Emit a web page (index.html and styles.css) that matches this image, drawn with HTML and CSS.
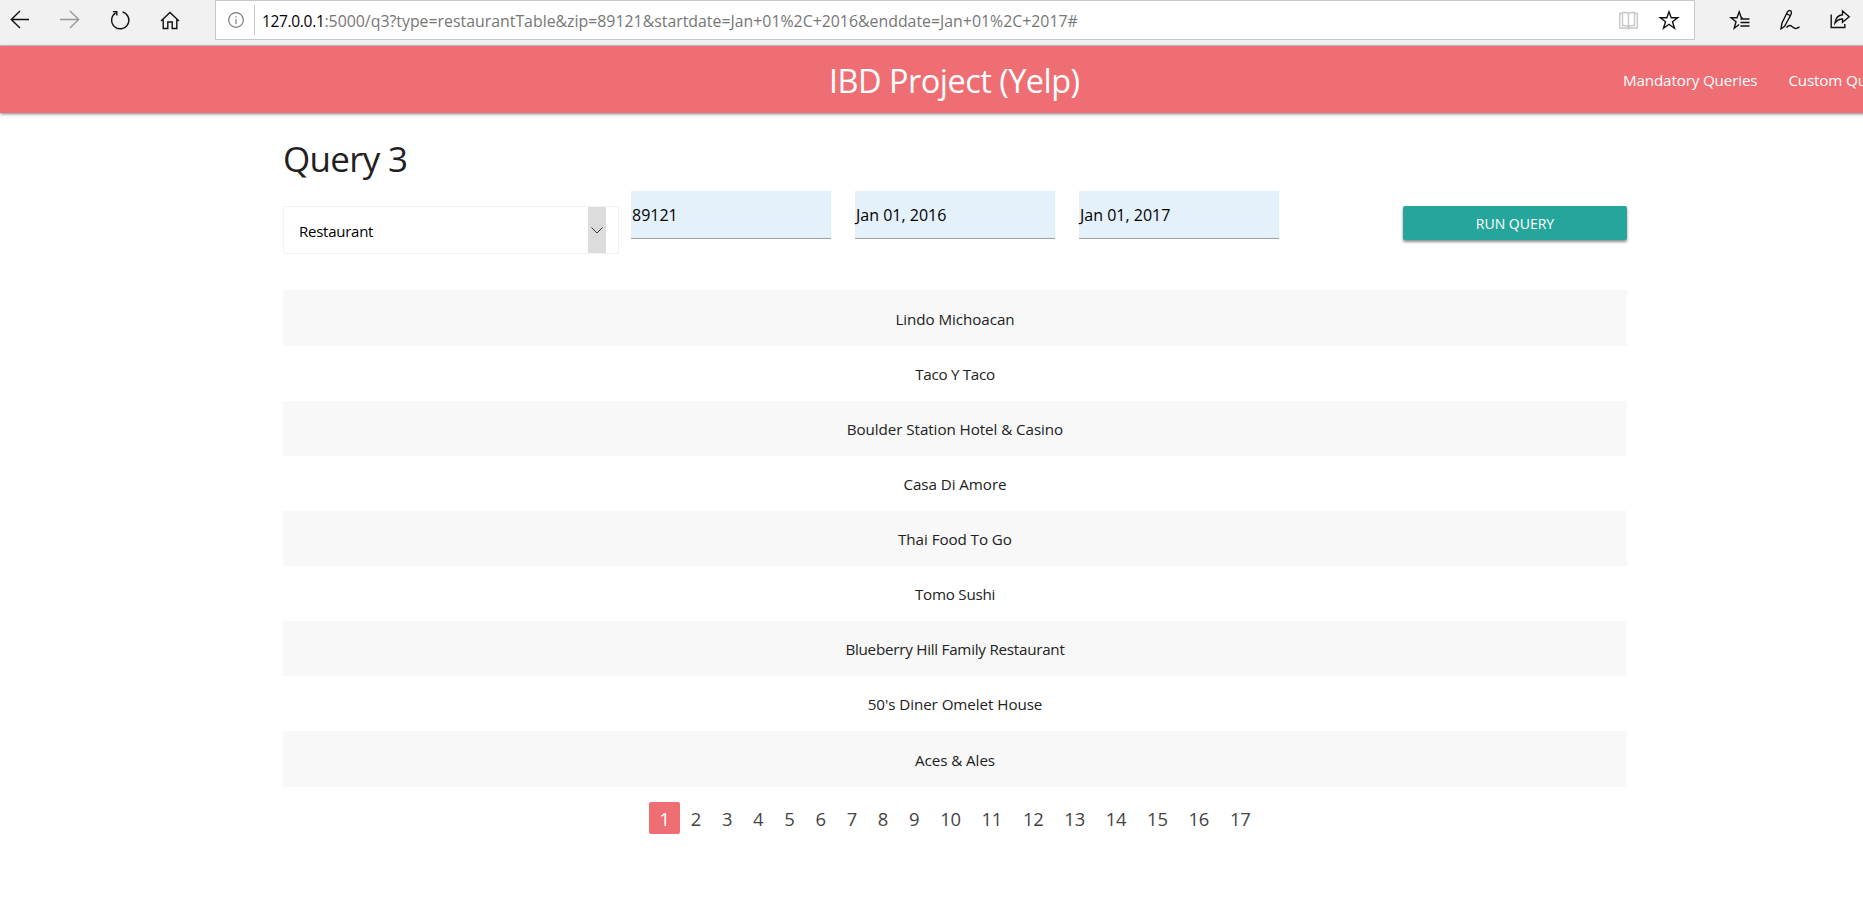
FILE: index.html
```
<!DOCTYPE html>
<html lang="en">
<head>
<meta charset="utf-8">
<title>IBD Project (Yelp)</title>
<link rel="stylesheet" href="styles.css">
</head>
<body>
<header class="toolbar">
  <div class="nav-buttons">
    <svg class="icon" viewBox="0 0 20 20"><path d="M19 9.500H1.500M10 1L1.300 9.500L10 18"/></svg>
    <svg class="icon muted" viewBox="0 0 20 20"><path d="M0 9.500H18.500M10 1L18.700 9.500L10 18"/></svg>
    <svg class="icon" viewBox="0 0 20 20"><path d="M12.500 1.900A8.600 8.600 0 1 1 5.700 2.900M2.900 1.600H6.800V5.600"/></svg>
    <svg class="icon" viewBox="0 0 20 20"><path d="M1 11L10 2.500L19 11M3.200 9.500V18.500H7.800V12H12.200V18.500H16.800V9.500"/></svg>
  </div>
  <div class="address">
    <svg class="info" viewBox="0 0 16 16"><circle cx="8" cy="8" r="7.300"/><path d="M8 7V12M8 4.200V5.600"/></svg>
    <span class="divider"></span>
    <span class="url"><span class="host">127.0.0.1</span>:5000/q3?type=restaurantTable&amp;zip=89121&amp;startdate=Jan+01%2C+2016&amp;enddate=Jan+01%2C+2017#</span>
    <svg class="icon book" viewBox="0 0 20 20"><path d="M9.500 3.500C8.500 2.300 7 2.300 3.500 2.500V15.500C7 15.300 8.500 15.500 9.500 17C10.500 15.500 12 15.300 15.500 15.500V2.500C12 2.300 10.500 2.300 9.500 3.500V17M3.500 3.500H.7V18H8L9.500 18.700L11 18H18.300V3.500H15.500"/></svg>
    <svg class="icon" viewBox="0 0 20 20"><path d="M10 1.800L12.200 7.800H18.700L13.500 11.700L15.500 18.300L10 14.300L4.500 18.300L6.500 11.700L1.300 7.800H7.800Z"/></svg>
  </div>
  <div class="tools">
    <svg class="icon" viewBox="0 0 20 20"><path d="M12.500 7.800H11.300L9.200 1.800L7 7.800H1L6 11.700L4.200 18.300L9.200 14.500M10.500 9H19.500M10.500 12.500H19.500M10.500 16H19.500"/></svg>
    <svg class="icon" viewBox="0 0 20 20"><path d="M1 18.700L2 13L7.500 1.800Q9 -.2 11 1Q11.900 2.500 11 4.500L4.500 16.500ZM6.500 3.600L10 5.500L9.500 8M6.500 17.500Q9.500 14 12 16.500T16.500 18.300L19.500 17"/></svg>
    <svg class="icon" viewBox="0 0 20 20"><path d="M1.200 4.500V17.500H14.800V14M5 13Q6 5.500 12.500 4.800V1L19.200 6.800L12.500 12.300V9Q8 9 5 13Z"/></svg>
  </div>
</header>

<div class="page">
  <nav class="navbar">
    <span class="brand">IBD Project (Yelp)</span>
    <a class="nav-link">Mandatory Queries</a>
    <a class="nav-link">Custom Queries</a>
  </nav>

  <main class="container">
    <h1 class="heading">Query 3</h1>
    <form class="filters">
      <div class="select">
        <span class="select-value">Restaurant</span>
        <span class="select-arrow"><svg class="chevron" viewBox="0 0 12 7"><path d="M.5 .5L6 6L11.500 .5"/></svg></span>
      </div>
      <div class="field">89121</div>
      <div class="field">Jan 01, 2016</div>
      <div class="field">Jan 01, 2017</div>
      <div class="button">RUN QUERY</div>
    </form>

    <div class="results">
      <div class="row">Lindo Michoacan</div>
      <div class="row tight">Taco Y Taco</div>
      <div class="row">Boulder Station Hotel &amp; Casino</div>
      <div class="row">Casa Di Amore</div>
      <div class="row">Thai Food To Go</div>
      <div class="row snug">Tomo Sushi</div>
      <div class="row snug">Blueberry Hill Family Restaurant</div>
      <div class="row">50's Diner Omelet House</div>
      <div class="row">Aces &amp; Ales</div>
    </div>

    <div class="pagination">
      <span class="num active">1</span><span class="num">2</span><span class="num">3</span><span class="num">4</span><span class="num">5</span><span class="num">6</span><span class="num">7</span><span class="num">8</span><span class="num">9</span><span class="num wide">10</span><span class="num wide">11</span><span class="num wide">12</span><span class="num wide">13</span><span class="num wide">14</span><span class="num wide">15</span><span class="num wide">16</span><span class="num wide">17</span>
    </div>
  </main>
</div>
</body>
</html>
```

FILE: styles.css
```
* { box-sizing: border-box; }

body {
  margin: 0;
  overflow: hidden;
  background: #fff;
  color: #212121;
  font-family: "Open Sans", "Noto Sans", sans-serif;
  font-size: 16px;
}

svg {
  display: block;
  flex: none;
  fill: none;
  stroke: #111;
  stroke-width: 1.4;
}

.icon {
  width: 20px;
  height: 20px;
  overflow: visible;
}
.muted { stroke: #999; }
.book { stroke: #c8c8c8; }

/* Browser toolbar */
.toolbar {
  display: flex;
  height: 46px;
  background: #f1f1f1;
  border-bottom: 1px solid #c8c8c8;
}
.nav-buttons {
  display: flex;
  gap: 30px;
  width: 215px;
  padding: 10px 0 0 10px;
}
.address {
  display: flex;
  align-items: center;
  width: 1480px;
  height: 40px;
  padding: 0 15px 0 12px;
  background: #fff;
  border: 1px solid #c8c8c8;
}
.address .icon { margin-left: 20px; }
.info {
  width: 16px;
  height: 16px;
  stroke: #7a7a7a;
  stroke-width: 1.2;
}
.divider {
  width: 1px;
  height: 30px;
  margin: 0 7px 0 10px;
  background: #c8c8c8;
}
.url {
  flex: 1;
  padding-top: 2px;
  color: #767676;
  font-size: 15.86px;
  white-space: nowrap;
}
.host {
  color: #000;
  font-size: 15.5px;
  letter-spacing: -0.33px;
}
.tools {
  display: flex;
  gap: 30px;
  padding: 10px 0 0 35px;
}

/* Page content is wider than the window and clipped at the right */
.page { width: 1910px; }

.navbar {
  display: flex;
  align-items: center;
  height: 67px;
  background: #ee6e73;
  box-shadow: 0 1px 3px rgba(0, 0, 0, .5);
  color: #fff;
}
.brand {
  flex: none;
  width: 1623px;
  padding: 1px 0 0 829px;
  font-size: 32.5px;
  letter-spacing: -0.53px;
}
.nav-link {
  flex: none;
  margin-right: 31px;
  font-size: 15.2px;
  letter-spacing: -0.15px;
}

.container {
  width: 1344px;
  margin-left: 283px;
}
.heading {
  height: 78px;
  margin: 0;
  padding-top: 22px;
  font-size: 35px;
  font-weight: 400;
  line-height: 48px;
  letter-spacing: -0.7px;
}

.filters {
  display: flex;
  align-items: flex-start;
  height: 99px;
}
.select {
  display: flex;
  width: 336px;
  height: 48px;
  margin: 15px 12px 0 0;
  padding: 0 12px 0 15px;
  border: 1px solid #f2f2f2;
  border-radius: 2px;
}
.select-value {
  flex: 1;
  padding-top: 1px;
  color: #000;
  font-size: 15px;
  line-height: 47px;
  letter-spacing: -0.25px;
}
.select-arrow {
  display: flex;
  width: 18px;
  justify-content: center;
  padding-top: 20px;
  background: #dcdcdc;
}
.chevron {
  width: 12px;
  height: 7px;
  stroke: #333;
  stroke-width: 1;
}
.field {
  width: 200px;
  height: 48px;
  margin-right: 24px;
  padding: 1px 0 0 1px;
  background: #e4f0fa;
  border-bottom: 1px solid #9e9e9e;
  color: #000;
  line-height: 47px;
}
.button {
  width: 224px;
  height: 34px;
  margin: 15px 0 0 auto;
  padding-top: 1px;
  border-radius: 2px;
  background: #26a69a;
  box-shadow: 0 2px 3px rgba(0, 0, 0, .45);
  color: #fff;
  font-size: 14px;
  line-height: 34px;
  text-align: center;
}

.row {
  height: 55px;
  font-size: 15.2px;
  line-height: 57px;
  letter-spacing: -0.07px;
  text-align: center;
}
.row:first-child,
.row:last-child {
  height: 56px;
  line-height: 58px;
}
.row:nth-child(odd) { background: #f8f8f8; }
.tight { letter-spacing: -0.3px; }
.snug { letter-spacing: -0.25px; }

.pagination {
  display: flex;
  justify-content: center;
  padding-top: 15px;
}
.num {
  width: 31.2px;
  height: 32px;
  border-radius: 2px;
  color: #444;
  font-size: 18.4px;
  line-height: 34px;
  letter-spacing: -0.2px;
  text-align: center;
}
.wide { width: 41.4px; }
.active { background: #ee6e73; color: #fff; }
```
